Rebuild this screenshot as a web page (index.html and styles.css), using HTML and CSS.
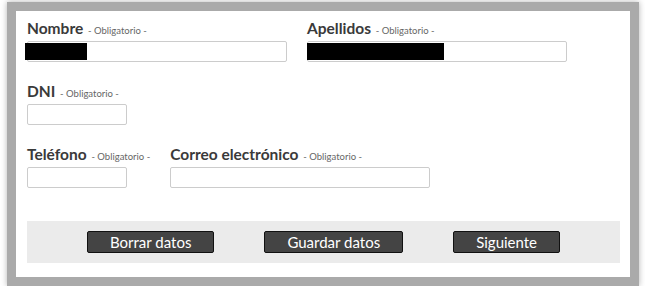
FILE: index.html
```html
<!DOCTYPE html>
<html lang="es">
<head>
    <meta charset="UTF-8">
    <meta name="viewport" content="width=device-width, initial-scale=1.0">
    <title>Datos personales</title>
    <link rel="stylesheet" href="styles.css">
</head>
<body>
    <div class="card">
        <form class="form" action="#" method="post">
            <div class="row">
                <div class="field wide">
                    <label for="nombre">Nombre <span class="req">- Obligatorio -</span></label>
                    <div class="box">
                        <input type="text" id="nombre" name="nombre">
                        <span class="redact redact-nombre"></span>
                    </div>
                </div>
                <div class="field wide">
                    <label for="apellidos">Apellidos <span class="req">- Obligatorio -</span></label>
                    <div class="box">
                        <input type="text" id="apellidos" name="apellidos">
                        <span class="redact redact-apellidos"></span>
                    </div>
                </div>
            </div>
            <div class="row">
                <div class="field short">
                    <label for="dni">DNI <span class="req">- Obligatorio -</span></label>
                    <input type="text" id="dni" name="dni">
                </div>
            </div>
            <div class="row row-last">
                <div class="field short">
                    <label for="telefono">Teléfono <span class="req">- Obligatorio -</span></label>
                    <input type="text" id="telefono" name="telefono">
                </div>
                <div class="field wide">
                    <label for="correo">Correo electrónico <span class="req">- Obligatorio -</span></label>
                    <input type="text" id="correo" name="correo">
                </div>
            </div>
            <div class="actions">
                <button type="reset" class="btn">Borrar datos</button>
                <button type="button" class="btn">Guardar datos</button>
                <button type="submit" class="btn">Siguiente</button>
            </div>
        </form>
    </div>
</body>
</html>
```

FILE: styles.css
```css
body {
    margin: 0;
    background-color: #fff;
    font-family: Lato, "Open Sans", sans-serif;
    color: #333;
}
.card {
    width: 593px;
    margin: 2px 0 0 7px;
    padding: 7px 10px 14px 11px;
    border: 9px solid #aaa;
    background-color: #fff;
    box-shadow: 0 0 6px rgba(0, 0, 0, 0.3);
}
.row {
    display: flex;
    gap: 20px;
    margin-bottom: 19px;
}
.row-last {
    margin-bottom: 33px;
}
.field {
    display: flex;
    flex-direction: column;
}
label {
    display: block;
    height: 21px;
    font-size: 15.5px;
    line-height: 21px;
    font-weight: 700;
    color: #3a3a3a;
    margin-bottom: 2px;
    white-space: nowrap;
}
.req {
    font-size: 9.5px;
    line-height: 1;
    font-weight: 400;
    color: #666;
    margin-left: 1px;
}
.box {
    position: relative;
}
input[type="text"] {
    display: block;
    height: 21px;
    padding: 0 4px;
    border: 1px solid #ccc;
    border-radius: 2px;
    box-sizing: border-box;
    font-family: inherit;
    font-size: 13px;
}
.wide input[type="text"] {
    width: 260px;
}
.short input[type="text"] {
    width: 100px;
}
.redact {
    position: absolute;
    top: 2px;
    height: 17px;
    background-color: #000;
}
.redact-nombre {
    left: -2px;
    width: 62px;
}
.redact-apellidos {
    left: 0;
    width: 137px;
}
.actions {
    display: flex;
    justify-content: center;
    align-items: center;
    gap: 50px;
    height: 42px;
    background-color: #ebebeb;
}
.btn {
    height: 22px;
    padding: 0 22px;
    background-color: #444;
    color: #fff;
    border: 1px solid #111;
    border-radius: 2px;
    font-family: inherit;
    font-size: 15px;
    line-height: 20px;
    cursor: pointer;
}
```
